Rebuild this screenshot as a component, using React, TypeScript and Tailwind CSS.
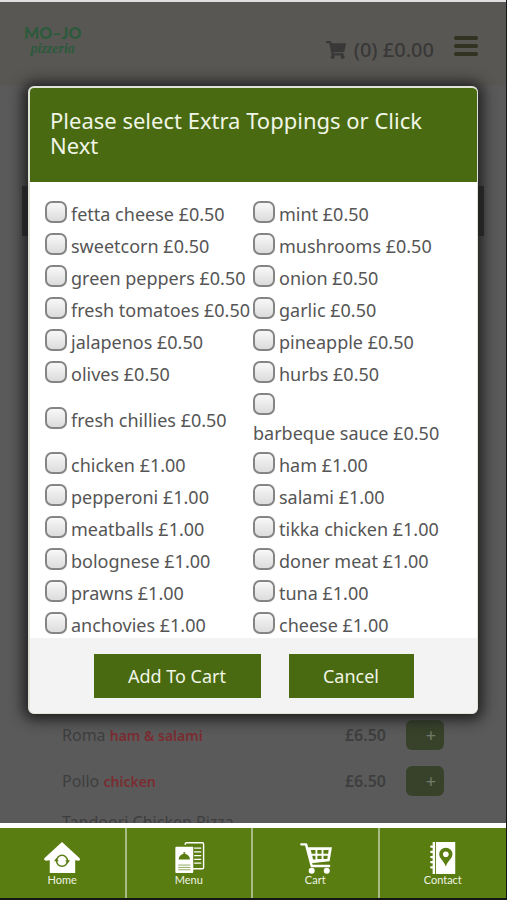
import { useState } from 'react'
import { FaShoppingCart } from 'react-icons/fa'

interface Topping {
  name: string
  price: string
  stacked?: boolean
}

const toppings: Topping[] = [
  { name: 'fetta cheese', price: '£0.50' },
  { name: 'mint', price: '£0.50' },
  { name: 'sweetcorn', price: '£0.50' },
  { name: 'mushrooms', price: '£0.50' },
  { name: 'green peppers', price: '£0.50' },
  { name: 'onion', price: '£0.50' },
  { name: 'fresh tomatoes', price: '£0.50' },
  { name: 'garlic', price: '£0.50' },
  { name: 'jalapenos', price: '£0.50' },
  { name: 'pineapple', price: '£0.50' },
  { name: 'olives', price: '£0.50' },
  { name: 'hurbs', price: '£0.50' },
  { name: 'fresh chillies', price: '£0.50' },
  { name: 'barbeque sauce', price: '£0.50', stacked: true },
  { name: 'chicken', price: '£1.00' },
  { name: 'ham', price: '£1.00' },
  { name: 'pepperoni', price: '£1.00' },
  { name: 'salami', price: '£1.00' },
  { name: 'meatballs', price: '£1.00' },
  { name: 'tikka chicken', price: '£1.00' },
  { name: 'bolognese', price: '£1.00' },
  { name: 'doner meat', price: '£1.00' },
  { name: 'prawns', price: '£1.00' },
  { name: 'tuna', price: '£1.00' },
  { name: 'anchovies', price: '£1.00' },
  { name: 'cheese', price: '£1.00' },
]

const pizzas = [
  { name: 'Roma', extra: 'ham & salami', price: '£6.50' },
  { name: 'Pollo', extra: 'chicken', price: '£6.50' },
]

function HomeIcon() {
  return (
    <svg viewBox="0 0 40 34" className="h-8 w-10" aria-hidden="true">
      <path
        d="M20 0 L38.500 17 Q40 19 38 20 L34 19.500 V33 H7 V19.500 L3 20 Q0 19 1.500 17 Z"
        fill="#fff"
      />
      <circle cx="20" cy="20" r="5.800" fill="none" stroke="#5a7d12" strokeWidth="1.600" />
      <path d="M11.500 20.500 L14 17 L16.500 20.500 Z M28.500 19.500 L26 23 L23.500 19.500 Z" fill="#5a7d12" />
    </svg>
  )
}

function MenuIcon() {
  return (
    <svg viewBox="-2 0 40 34" className="h-8 w-10" aria-hidden="true">
      <path
        d="M14 3 V2 Q14 0.800 15.500 0.800 H32 Q33.500 0.800 33.500 2.300 V27 Q33.500 28.500 32 28.500 H22"
        fill="none"
        stroke="#fff"
        strokeWidth="1.500"
      />
      <path d="M23.500 6.500h7.500 M23.500 10.500h7.500 M23.500 14.500h7.500 M23.500 18.500h7.500 M23.500 22.500h7.500" stroke="#fff" strokeWidth="1.300" />
      <path d="M14 1.500 L22.500 6 V5 H4.500 Q3.500 5 3.500 6 V32 Q3.500 33 4.500 33 H21.500 Q22.500 33 22.500 32 V6 Z" fill="#fff" />
      <path d="M7 18.500 a6 6 0 0 1 12 0 z M12 12.500 h2 v-1.500 h-2z" fill="#5a7d12" />
      <path d="M6.500 24.500h13 M6.500 27h13 M6.500 29.500h13" stroke="#8ba557" strokeWidth="1" />
    </svg>
  )
}

function CartIcon() {
  return (
    <svg viewBox="-2 0 40 34" className="h-8 w-10" aria-hidden="true">
      <path
        d="M3.500 2.500 H8.500 L14.500 25.500 H33"
        fill="none"
        stroke="#fff"
        strokeWidth="2.600"
        strokeLinecap="round"
        strokeLinejoin="round"
      />
      <path d="M10 5.500 H36 L33.500 20.500 L14 22.500 Z" fill="#fff" />
      <path
        d="M13.500 8.500h5v4h-4z M20.500 8.500h4.500v4h-4.500z M27 8.500h5.500l-.6 4h-4.900z M15 14.500h3.500v4h-2.600z M20.500 14.500h4.500v3.500h-4.500z M27 14.500h4.600l-.6 3.500h-4z"
        fill="#5a7d12"
      />
      <circle cx="14.500" cy="30.500" r="3.200" fill="#fff" />
      <circle cx="30.500" cy="30.500" r="3.200" fill="#fff" />
    </svg>
  )
}

function ContactIcon() {
  return (
    <svg viewBox="0 0 40 34" className="h-8 w-10" aria-hidden="true">
      <path d="M9 0h2.500v34H9z M12.500 0h20.500v34H12.500z" fill="#fff" />
      <path d="M7.500 5h3 M7.500 10.500h3 M7.500 16h3 M7.500 21.500h3 M7.500 27h3" stroke="#fff" strokeWidth="2.400" strokeLinecap="round" />
      <path d="M23 26 C21 20 16 17.500 16 13 a7 7 0 0 1 14 0 C30 17.500 25 20 23 26 Z" fill="#5a7d12" />
      <circle cx="23" cy="13" r="3" fill="#fff" />
    </svg>
  )
}

const navItems = [
  { label: 'Home', Icon: HomeIcon },
  { label: 'Menu', Icon: MenuIcon },
  { label: 'Cart', Icon: CartIcon },
  { label: 'Contact', Icon: ContactIcon },
]

export default function App() {
  const [selected, setSelected] = useState<string[]>([])

  const toggle = (name: string) => {
    setSelected((prev) =>
      prev.includes(name) ? prev.filter((n) => n !== name) : [...prev, name]
    )
  }

  return (
    <div className="flex h-screen min-h-[900px] flex-col border-r border-b-2 border-[#151515] bg-[#5a5a5a] font-['Noto_Sans',sans-serif]">
      <main className="relative flex flex-1 flex-col overflow-hidden border-t-2 border-[#e0e0e0]">
        <header className="flex h-[84px] items-start justify-between bg-[#595753] pr-7 pl-6">
          <a href="#home" className="flex flex-col items-center pt-[21px] text-[#2c5a3c]">
            <span className="font-['Lato',sans-serif] text-base leading-5 font-black">MO–JO</span>
            <span className="font-['Liberation_Serif',serif] text-sm leading-3 font-bold italic">pizzeria</span>
          </a>
          <div className="flex items-center pt-8 text-[#383838]">
            <a href="#cart" className="flex items-center gap-2 text-xl leading-8 font-medium">
              <FaShoppingCart className="h-5 w-5" />
              (0) £0.00
            </a>
            <button aria-label="Open menu" className="-mt-2 ml-5 flex w-6 flex-col gap-1">
              <span className="h-1 rounded-sm bg-[#30331f]" />
              <span className="h-1 rounded-sm bg-[#30331f]" />
              <span className="h-1 rounded-sm bg-[#30331f]" />
            </button>
          </div>
        </header>

        <div className="mx-[22px] mt-[100px] h-[50px] bg-[#2b2b2b]" />

        <ul className="mt-auto h-[111px] overflow-hidden px-[62px] text-base text-[#3e3e3e]">
          {pizzas.map((p) => (
            <li key={p.name} className="flex h-[46px] items-center">
              <span className="flex-1">
                {p.name} <b className="text-sm font-semibold text-[#7a2c31]">{p.extra}</b>
              </span>
              <span className="font-semibold">{p.price}</span>
              <button
                aria-label={`Add ${p.name}`}
                className="ml-5 h-[30px] w-[38px] rounded-md bg-[#38422a] pl-3 text-lg leading-none text-[#747a6b]"
              >
                +
              </button>
            </li>
          ))}
          <li className="leading-9">Tandoori Chicken Pizza</li>
        </ul>

        <div className="absolute inset-0 flex items-start px-7 pt-[84px]">
          <div
            role="dialog"
            aria-modal="true"
            aria-labelledby="dialog-title"
            className="w-full overflow-hidden rounded-md border-2 border-r border-b border-[#dfe3d8] bg-white shadow-[0_1px_14px_5px_#202020]"
          >
            <h2
              id="dialog-title"
              className="bg-[#496a10] px-5 pt-5 pb-6 text-[22px] leading-[25px] text-[#f0f5e6]"
            >
              Please select Extra Toppings or Click Next
            </h2>

            <div className="grid max-h-[456px] grid-cols-[208px_1fr] overflow-hidden pt-4 pl-[15px] text-lg text-[#555]">
              {toppings.map((t) => (
                <label
                  key={t.name}
                  className={
                    t.stacked
                      ? 'flex h-[59px] flex-col pt-[3px] leading-7 whitespace-nowrap'
                      : 'flex min-h-8 items-center gap-1 leading-8 whitespace-nowrap'
                  }
                >
                  <input
                    type="checkbox"
                    checked={selected.includes(t.name)}
                    onChange={() => toggle(t.name)}
                    className="mb-1 h-[22px] w-[22px] shrink-0 appearance-none rounded-[7px] border-2 border-[#858585] bg-linear-to-b from-[#f8f8f8] to-[#dcdcdc] checked:from-[#7d9c4a] checked:to-[#496a10]"
                  />
                  <span>
                    {t.name} {t.price}
                  </span>
                </label>
              ))}
            </div>

            <div className="flex justify-center gap-7 bg-[#f3f3f3] pt-4 pb-[15px]">
              <button className="h-11 w-[167px] bg-[#496a10] text-lg text-[#f0f5e6]">Add To Cart</button>
              <button className="h-11 w-[125px] bg-[#496a10] text-lg text-[#f0f5e6]">Cancel</button>
            </div>
          </div>
        </div>
      </main>

      <nav className="grid grid-cols-4 divide-x-2 divide-[#a9bb84] border-t-[5px] border-white bg-[#5a7d12]">
        {navItems.map(({ label, Icon }) => (
          <a
            key={label}
            href={`#${label.toLowerCase()}`}
            className="flex h-[70px] flex-col items-center pt-[14px] font-['Lato',sans-serif] text-[11px] leading-3 text-[#eef3e2]"
          >
            <Icon />
            {label}
          </a>
        ))}
      </nav>
    </div>
  )
}
